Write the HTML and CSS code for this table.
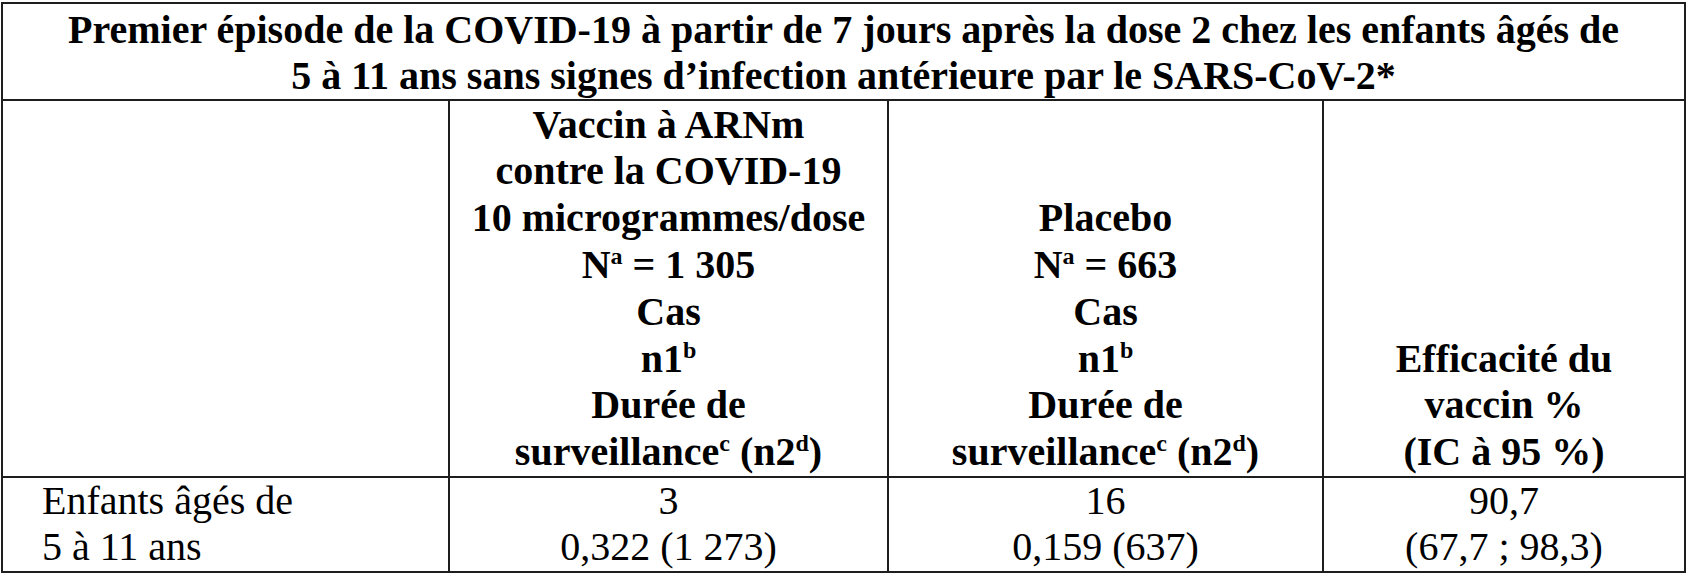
FILE: index.html
```html
<!DOCTYPE html>
<html lang="fr">
<head>
<meta charset="utf-8">
<title>Efficacité du vaccin</title>
<link rel="stylesheet" href="styles.css">
</head>
<body>
<div class="table">
  <div class="cell title">Premier épisode de la COVID-19 à partir de 7 jours après la dose 2 chez les enfants âgés de<br>5 à 11 ans sans signes d’infection antérieure par le SARS-CoV-2*</div>
  <div class="cell head"></div>
  <div class="cell head"><p>Vaccin à ARNm<br>contre la COVID-19<br>10 microgrammes/dose<br>N<sup>a</sup> = 1 305<br>Cas<br>n1<sup>b</sup><br>Durée de<br>surveillance<sup>c</sup> (n2<sup>d</sup>)</p></div>
  <div class="cell head"><p>Placebo<br>N<sup>a</sup> = 663<br>Cas<br>n1<sup>b</sup><br>Durée de<br>surveillance<sup>c</sup> (n2<sup>d</sup>)</p></div>
  <div class="cell head"><p>Efficacité du<br>vaccin %<br>(IC à 95 %)</p></div>
  <div class="cell data label">Enfants âgés de<br>5 à 11 ans</div>
  <div class="cell data">3<br>0,322 (1 273)</div>
  <div class="cell data">16<br>0,159 (637)</div>
  <div class="cell data">90,7<br>(67,7 ; 98,3)</div>
</div>
</body>
</html>
```
FILE: styles.css
```css
html, body {
  margin: 0;
  padding: 0;
  background: #ffffff;
  font-family: "Liberation Serif", "Times New Roman", serif;
}

.table {
  display: grid;
  grid-template-columns: 445px 437px 433px 360px;
  grid-template-rows: 95px 375px 93px;
  gap: 2px;
  padding: 2px;
  width: max-content;
  margin: 2px 0 0 1px;
  background: #1e1e1e;
  font-size: 40px;
  color: #000000;
}

.cell {
  background: #ffffff;
}

.title {
  grid-column: 1 / -1;
  text-align: center;
  font-weight: 700;
  line-height: 46px;
  padding-top: 3px;
}

.head {
  display: flex;
  align-items: flex-end;
  justify-content: center;
  font-weight: 700;
  text-align: center;
  line-height: 46.8px;
}

.head p {
  margin: 0;
}

.data {
  text-align: center;
  line-height: 46px;
}

.label {
  text-align: left;
  padding-left: 39px;
}

sup {
  font-size: 0.6em;
  line-height: 0;
  vertical-align: super;
}
```
